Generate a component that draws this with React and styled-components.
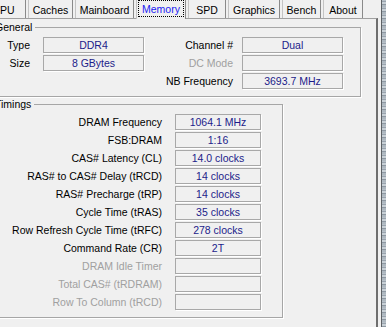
import React from 'react'
import styled, { createGlobalStyle } from 'styled-components'

const GlobalStyle = createGlobalStyle`
  html, body {
    margin: 0;
    padding: 0;
    background: #f0f0f0;
  }
  body {
    font-family: "Liberation Sans", Arial, sans-serif;
    font-size: 10.5px;
    color: #000;
  }
`

const Window = styled.div`
  display: flex;
  width: 386px;
  height: 327px;
  overflow: hidden;
  background: #f0f0f0;
`

const Content = styled.div`
  display: flex;
  flex-direction: column;
  flex: none;
  width: 397px;
  margin-left: -19px;
`

const Desktop = styled.div`
  flex: 1;
  margin-left: 3px;
  border-left: 1px solid #5e6266;
  background:
    repeating-linear-gradient(180deg,
      #b7c0c8 0 1px, #9aa4ae 1px 2px, #c8d0d6 2px 4px,
      #8e98a2 4px 5px, #aeb8c0 5px 7px);
`

const TabStrip = styled.div`
  display: flex;
  align-items: flex-end;
  gap: 2px;
  height: 18px;
`

const Tab = styled.div`
  box-sizing: border-box;
  flex: none;
  width: ${(p) => p.$w}px;
  height: ${(p) => (p.$active ? 19 : 18)}px;
  margin-bottom: ${(p) => (p.$active ? -1 : 0)}px;
  position: relative;
  z-index: ${(p) => (p.$active ? 1 : 0)};
  display: flex;
  align-items: stretch;
  justify-content: center;
  padding: 0 ${(p) => (p.$active ? 1 : 0)}px ${(p) => (p.$active ? 2 : 0)}px;
  background: #f0f0f0;
  border-left: 1px solid #c4c4c4;
  border-right: 1px solid #8a8a8a;
  color: ${(p) => (p.$active ? '#2222f2' : '#000')};
`

const TabLabel = styled.span`
  flex: 1;
  display: flex;
  align-items: center;
  justify-content: center;
  padding-top: 1px;
  border: 1px dotted ${(p) => (p.$focus ? '#000' : 'transparent')};
`

const Panel = styled.div`
  flex: 1;
  display: flex;
  flex-direction: column;
  gap: 1px;
  padding: 2px 0 0 7px;
  border-top: 1px solid #a0a0a0;
  border-right: 2px solid #6e6e6e;
`

const Group = styled.fieldset`
  box-sizing: border-box;
  width: ${(p) => p.$w}px;
  min-width: 0;
  margin: 0;
  padding: 0;
  border: 1px solid #a6a6a6;
  box-shadow: 1px 1px 0 #fff;
`

const Legend = styled.legend`
  margin-left: 5px;
  padding: 0 3px 0 1px;
  line-height: 13px;
`

const Grid = styled.div`
  display: grid;
  grid-template-columns: ${(p) => p.$cols};
  grid-auto-rows: 16px;
  row-gap: 2px;
  padding: 3px 0 ${(p) => p.$pb}px;
`

const Label = styled.div`
  display: flex;
  align-items: center;
  justify-content: flex-end;
  padding-right: ${(p) => p.$pr}px;
  white-space: nowrap;
  color: ${(p) => (p.$off ? '#a0a0a0' : '#000')};
`

const Value = styled.div`
  box-sizing: border-box;
  display: flex;
  align-items: center;
  justify-content: center;
  border: 1px solid #a8a8a8;
  box-shadow: 1px 1px 0 #fff;
  color: #1c1c8a;
  white-space: nowrap;
`

const Empty = styled.div``

const tabs = [
  ['CPU', 45],
  ['Caches', 45],
  ['Mainboard', 59],
  ['Memory', 50],
  ['SPD', 38],
  ['Graphics', 52],
  ['Bench', 39],
  ['About', 40],
]

const timings = [
  ['DRAM Frequency', '1064.1 MHz'],
  ['FSB:DRAM', '1:16'],
  ['CAS# Latency (CL)', '14.0 clocks'],
  ['RAS# to CAS# Delay (tRCD)', '14 clocks'],
  ['RAS# Precharge (tRP)', '14 clocks'],
  ['Cycle Time (tRAS)', '35 clocks'],
  ['Row Refresh Cycle Time (tRFC)', '278 clocks'],
  ['Command Rate (CR)', '2T'],
  ['DRAM Idle Timer', '', true],
  ['Total CAS# (tRDRAM)', '', true],
  ['Row To Column (tRCD)', '', true],
]

const App = () => (
  <Window>
    <GlobalStyle />
    <Content>
      <TabStrip>
        {tabs.map(([name, w]) => (
          <Tab key={name} $w={w} $active={name === 'Memory'}>
            <TabLabel $focus={name === 'Memory'}>{name}</TabLabel>
          </Tab>
        ))}
      </TabStrip>
      <Panel>
        <Group $w={373}>
          <Legend>General</Legend>
          <Grid $cols="54px 101px 98px 101px" $pb={7}>
            <Label $pr={13}>Type</Label>
            <Value>DDR4</Value>
            <Label $pr={9}>Channel #</Label>
            <Value>Dual</Value>

            <Label $pr={13}>Size</Label>
            <Value>8 GBytes</Value>
            <Label $pr={9} $off>DC Mode</Label>
            <Value />

            <Empty />
            <Empty />
            <Label $pr={9}>NB Frequency</Label>
            <Value>3693.7 MHz</Value>
          </Grid>
        </Group>
        <Group $w={295}>
          <Legend>Timings</Legend>
          <Grid $cols="186px 86px" $pb={7}>
            {timings.map(([name, value, off]) => (
              <React.Fragment key={name}>
                <Label $pr={13} $off={off}>{name}</Label>
                <Value>{value}</Value>
              </React.Fragment>
            ))}
          </Grid>
        </Group>
      </Panel>
    </Content>
    <Desktop />
  </Window>
)

export default App
